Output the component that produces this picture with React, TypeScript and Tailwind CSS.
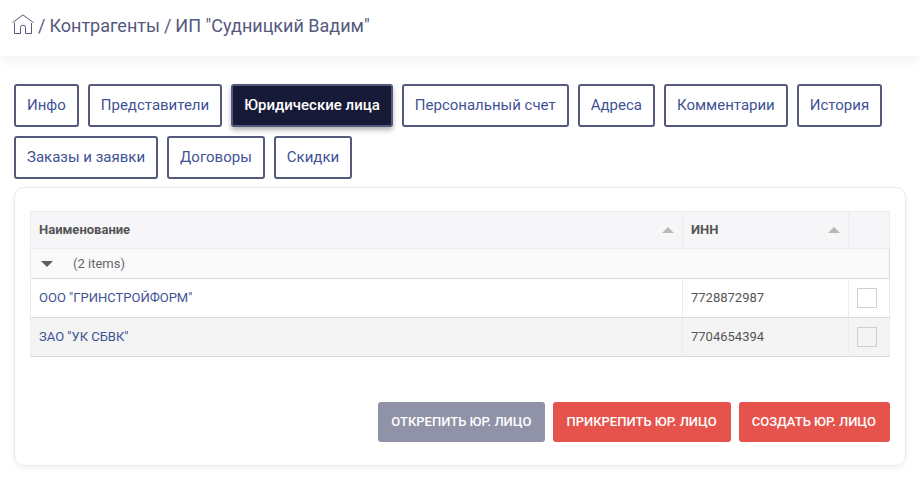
const tabs = [
  'Инфо',
  'Представители',
  'Юридические лица',
  'Персональный счет',
  'Адреса',
  'Комментарии',
  'История',
  'Заказы и заявки',
  'Договоры',
  'Скидки',
];

const activeTab = 'Юридические лица';

const entities = [
  { name: 'ООО "ГРИНСТРОЙФОРМ"', inn: '7728872987' },
  { name: 'ЗАО "УК СБВК"', inn: '7704654394' },
];

function HomeIcon() {
  return (
    <svg width="22" height="20" viewBox="0 0 22 20" fill="none" stroke="currentColor" strokeWidth="1" aria-hidden="true">
      <path d="M0.5 8.7 11 0.9 21.5 8.7" />
      <path d="M2.5 9v10.500h6v-5.800a2.500 2.500 0 0 1 5 0v5.800h6V9" />
    </svg>
  );
}

function Breadcrumbs() {
  return (
    <header className="h-14 shadow-[0_3px_12px_rgba(40,60,60,0.07)]">
      <nav aria-label="Навигация" className="flex items-center gap-1 px-3 pt-3 text-[18px] leading-7 text-[#55597e]">
        <a href="#home" aria-label="Главная" className="-mt-1">
          <HomeIcon />
        </a>
        <span>/</span>
        <a href="#contractors">Контрагенты</a>
        <span>/</span>
        <span>ИП "Судницкий Вадим"</span>
      </nav>
    </header>
  );
}

function Tabs() {
  return (
    <nav aria-label="Разделы" className="flex flex-wrap gap-[9px]">
      {tabs.map((tab) => (
        <a
          key={tab}
          href="#tab"
          aria-current={tab === activeTab ? 'page' : undefined}
          className={
            tab === activeTab
              ? 'rounded-[3px] border-2 border-[#55597d] bg-[#171a36] px-[11px] py-[9px] text-[15px] leading-[21px] font-medium text-white shadow-[0_3px_5px_rgba(0,0,0,0.3)]'
              : 'rounded-[3px] border-2 border-[#55597d] bg-white px-[11px] py-[9px] text-[15px] leading-[21px] text-[#3f5296]'
          }
        >
          {tab}
        </a>
      ))}
    </nav>
  );
}

function SortArrow() {
  return (
    <svg width="12" height="6" viewBox="0 0 12 6" fill="#b8b8b8" aria-hidden="true">
      <path d="M6 0 12 6H0z" />
    </svg>
  );
}

function EntitiesTable() {
  return (
    <table className="w-full table-fixed border-separate border-spacing-0 border-t border-l border-[#ececef] text-left text-[13px] leading-5 text-[#555]">
      <colgroup>
        <col />
        <col className="w-[166px]" />
        <col className="w-[41px]" />
      </colgroup>
      <thead className="bg-[#f6f6f9]">
        <tr>
          <th className="h-[37px] border-r border-b border-[#ececef] px-2 py-0">
            <button type="button" className="flex w-full items-center justify-between font-bold">
              Наименование
              <SortArrow />
            </button>
          </th>
          <th className="border-r border-b border-[#ececef] px-2 py-0">
            <button type="button" className="flex w-full items-center justify-between font-bold">
              ИНН
              <SortArrow />
            </button>
          </th>
          <td className="border-r border-b border-[#ececef]" />
        </tr>
      </thead>
      <tbody>
        <tr className="bg-[#fafafa]">
          <td colSpan={3} className="h-[30px] border-r border-b border-[#d9d9dc] px-[10px] py-0">
            <button type="button" className="flex items-center gap-5 text-[#666]">
              <svg width="12" height="6" viewBox="0 0 12 6" fill="#5c5c5c" aria-hidden="true">
                <path d="M0 0h12L6 6z" />
              </svg>
              (2 items)
            </button>
          </td>
        </tr>
        {entities.map((entity) => (
          <tr key={entity.inn} className="even:bg-white odd:bg-[#f4f4f4]">
            <td className="h-[39px] border-r border-b border-r-[#ececef] border-b-[#d9d9dc] px-2 py-0">
              <a href="#entity" className="text-[#3f5296]">
                {entity.name}
              </a>
            </td>
            <td className="border-r border-b border-r-[#ececef] border-b-[#d9d9dc] px-2 py-0">{entity.inn}</td>
            <td className="border-r border-b border-r-[#ececef] border-b-[#d9d9dc] px-2 py-0">
              <input
                type="checkbox"
                aria-label={entity.name}
                className="block size-5 appearance-none border border-[#cfcfcf] checked:bg-[#55597d]"
              />
            </td>
          </tr>
        ))}
      </tbody>
    </table>
  );
}

function Actions() {
  return (
    <div className="mt-[45px] flex flex-wrap justify-end gap-2 text-[13px] leading-5 font-medium text-white">
      <button type="button" className="rounded-[3px] bg-[#9092a8] py-[10px] pr-[14px] pl-[13px]">
        ОТКРЕПИТЬ ЮР. ЛИЦО
      </button>
      <button type="button" className="rounded-[3px] bg-[#e6534c] py-[10px] pr-[14px] pl-[13px]">
        ПРИКРЕПИТЬ ЮР. ЛИЦО
      </button>
      <button type="button" className="rounded-[3px] bg-[#e6534c] py-[10px] pr-[14px] pl-[13px]">
        СОЗДАТЬ ЮР. ЛИЦО
      </button>
    </div>
  );
}

export default function App() {
  return (
    <div className="min-h-screen bg-white font-[Roboto,'Liberation_Sans',sans-serif]">
      <Breadcrumbs />
      <main className="px-[14px] pt-7">
        <Tabs />
        <section className="mt-2 rounded-[10px] border border-[#e9e9ec] px-[15px] pt-[23px] pb-[23px] shadow-[0_2px_6px_rgba(0,0,0,0.06)]">
          <EntitiesTable />
          <Actions />
        </section>
      </main>
    </div>
  );
}
